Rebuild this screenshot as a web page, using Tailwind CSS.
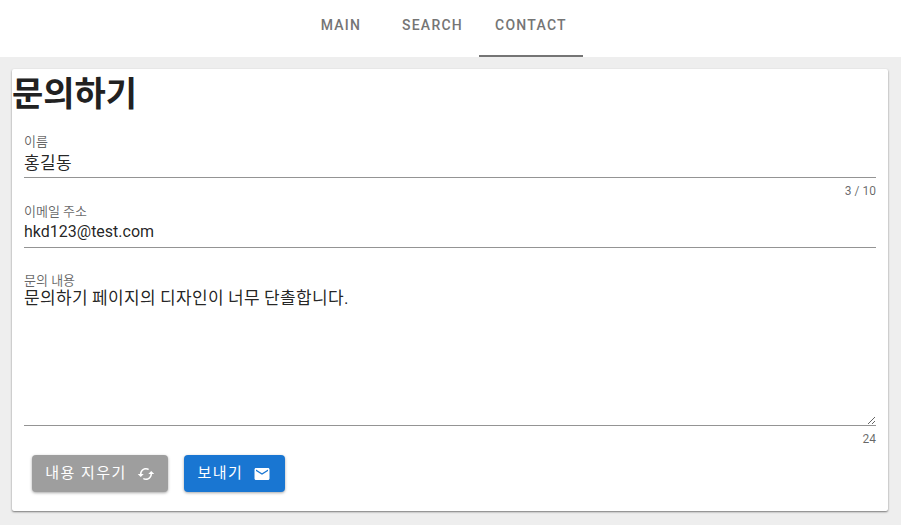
<!DOCTYPE html>
<html lang="ko">
<head>
    <meta charset="UTF-8">
    <meta name="viewport" content="width=device-width, initial-scale=1.0">
    <title>문의하기</title>
    <script src="https://cdn.jsdelivr.net/npm/@tailwindcss/browser@4"></script>
</head>
<body class="h-[525px] overflow-hidden bg-[#eeeeee] font-['Roboto','Noto_Sans_CJK_KR',sans-serif] text-[#000000de]">
    <nav class="flex h-[57px] bg-white pl-[296px] text-sm font-medium tracking-[1.25px] text-[#757575]">
        <a class="flex w-[90px] items-center justify-center pb-[7px]">MAIN</a>
        <a class="flex w-[93px] items-center justify-center pb-[7px]">SEARCH</a>
        <a class="flex w-[104px] items-center justify-center border-b-2 border-[#757575] pb-[5px]">CONTACT</a>
    </nav>
    <main class="mt-3 ml-3 h-[442px] w-[876px] rounded-[2px] bg-white shadow-[0_1px_2px_rgba(0,0,0,0.5)]">
        <h1 class="h-[49px] text-[34px] leading-[50px] font-bold text-[#212121]">문의하기</h1>
        <form class="px-3">
            <div class="h-[70px] pt-[17px]">
                <label class="block text-[13px] leading-[14px] text-[#00000099]">이름</label>
                <input value="홍길동" class="h-[29px] w-full border-b border-[#949494] pb-1 text-[17px] tracking-[0.36px] outline-none">
                <div class="mt-[6px] text-right text-xs leading-[14px] text-[#00000099]">3 / 10</div>
            </div>
            <div class="h-[70px] pt-[17px]">
                <label class="block text-[13px] leading-[14px] text-[#00000099]">이메일 주소</label>
                <input value="hkd123@test.com" class="h-[29px] w-full border-b border-[#949494] pb-1 text-base outline-none">
            </div>
            <div class="pt-[16px]">
                <label class="block text-[13px] leading-[14px] text-[#00000099]">문의 내용</label>
                <textarea class="-mt-[2px] block h-[140px] w-full resize-y border-b border-[#949494] text-[17px] leading-6 tracking-[0.36px] [word-spacing:-0.6px] outline-none">문의하기 페이지의 디자인이 너무 단촐합니다.</textarea>
                <div class="mt-[6px] text-right text-xs leading-[14px] text-[#00000099]">24</div>
            </div>
            <div class="mt-[9px] flex gap-4 pl-2">
                <button type="button" class="flex h-[37px] w-[136px] items-center justify-center gap-[10px] rounded bg-[#9e9e9e] text-[15px] tracking-[1.45px] text-white shadow-[0_1px_3px_rgba(0,0,0,0.35)]">
                    내용 지우기
                    <svg class="h-[18px] w-[18px]" viewBox="0 0 24 24" fill="currentColor"><path d="M19 8l-4 4h3c0 3.31-2.69 6-6 6-1.01 0-1.97-.25-2.8-.7l-1.46 1.46C8.97 19.54 10.43 20 12 20c4.42 0 8-3.58 8-8h3l-4-4zM6 12c0-3.31 2.69-6 6-6 1.01 0 1.97.25 2.8.7l1.46-1.46C15.03 4.46 13.57 4 12 4c-4.42 0-8 3.58-8 8H1l4 4 4-4H6z"/></svg>
                </button>
                <button type="button" class="flex h-[37px] w-[101px] items-center justify-center gap-[10px] rounded bg-[#1976d2] text-[15px] tracking-[1.45px] text-white shadow-[0_1px_3px_rgba(0,0,0,0.35)]">
                    보내기
                    <svg class="h-[18px] w-[18px]" viewBox="0 0 24 24" fill="currentColor"><path d="M20 4H4c-1.1 0-2 .9-2 2v12c0 1.1.9 2 2 2h16c1.1 0 2-.9 2-2V6c0-1.1-.9-2-2-2zm0 4l-8 5-8-5V6l8 5 8-5v2z"/></svg>
                </button>
            </div>
        </form>
    </main>
</body>
</html>
